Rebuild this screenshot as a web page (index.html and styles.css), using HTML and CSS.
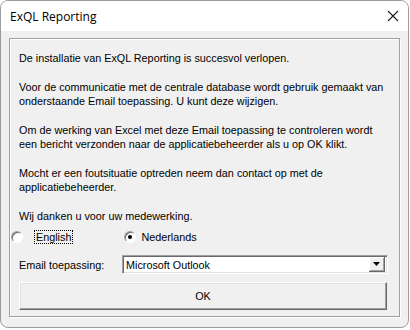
FILE: index.html
```html
<!DOCTYPE html>
<html lang="nl">
<head>
    <meta charset="UTF-8">
    <title>ExQL Reporting</title>
    <link rel="stylesheet" href="styles.css">
</head>
<body>

<div class="window">
    <div class="titlebar">
        <span class="title">ExQL Reporting</span>
        <svg class="close" width="12" height="12" viewBox="0 0 12 12">
            <path d="M1 1 L11 11 M11 1 L1 11" stroke="#1a1a1a" stroke-width="1.1" fill="none"/>
        </svg>
    </div>

    <div class="client">
        <div class="frame">
            <p>De installatie van ExQL Reporting is succesvol verlopen.</p>
            <p>Voor de communicatie met de centrale database wordt gebruik gemaakt van<br>onderstaande Email toepassing. U kunt deze wijzigen.</p>
            <p>Om de werking van Excel met deze Email toepassing te controleren wordt<br>een bericht verzonden naar de applicatiebeheerder als u op OK klikt.</p>
            <p>Mocht er een foutsituatie optreden neem dan contact op met de<br>applicatiebeheerder.</p>
            <p class="last">Wij danken u voor uw medewerking.</p>

            <div class="languages">
                <label class="radio english">
                    <span class="dot"></span>
                    <span class="focus">English</span>
                </label>
                <label class="radio checked">
                    <span class="dot"></span>
                    <span>Nederlands</span>
                </label>
            </div>

            <div class="mailrow">
                <span class="mailLabel">Email toepassing:</span>
                <div class="combo">
                    <span class="comboText">Microsoft Outlook</span>
                    <span class="comboButton">
                        <svg width="7" height="4" viewBox="0 0 7 4"><path d="M0 0 H7 L3.5 4 Z" fill="#000"/></svg>
                    </span>
                </div>
            </div>

            <button type="button" class="okButton">OK</button>
        </div>
    </div>
</div>

</body>
</html>
```

FILE: styles.css
```css
body {
    margin: 0;
    background-color: #ffffff;
    font-family: "Liberation Sans", Arial, sans-serif;
}

.window {
    width: 407px;
    height: 326px;
    border: 1px solid #9c9c9c;
    border-radius: 8px;
    background-color: #f0f0f0;
    overflow: hidden;
}

.titlebar {
    height: 30px;
    background-color: #fff;
    display: flex;
    align-items: center;
    justify-content: space-between;
    padding: 0 9px 0 9px;
}

.title {
    font-family: "Open Sans", "Noto Sans", sans-serif;
    font-size: 12px;
    color: #000;
    margin-top: 1px;
}

.client {
    padding: 7px 8px 0 8px;
}

.frame {
    border: 1px solid #a0a0a0;
    box-shadow: inset 1px 1px 0 #fff, 1px 1px 0 #fff;
    padding: 12px 9px 0 9px;
    font-size: 10.8px;
    color: #000;
    box-sizing: border-box;
    height: 279px;
}

.frame p {
    margin: 0 0 14px 0;
    line-height: 14.5px;
    white-space: nowrap;
}

.frame p.last {
    margin-bottom: 6px;
}

.languages {
    display: flex;
    align-items: center;
    height: 16px;
}

.radio {
    display: flex;
    align-items: center;
}

.radio.english {
    margin-left: -8px;
    gap: 12px;
}

.radio.checked {
    margin-left: 52px;
    gap: 5px;
}

.dot {
    width: 10px;
    height: 10px;
    border-radius: 50%;
    border: 1px solid;
    border-color: #a0a0a0 #fff #fff #a0a0a0;
    background-color: #fff;
    box-shadow: inset 1px 1px 0 #696969;
    position: relative;
}

.checked .dot::after {
    content: "";
    position: absolute;
    left: 3px;
    top: 3px;
    width: 4px;
    height: 4px;
    border-radius: 50%;
    background-color: #000;
}

.focus {
    outline: 1px dotted #000;
    outline-offset: 0;
    padding: 0 1px;
}

.mailrow {
    display: flex;
    align-items: center;
    margin-top: 10px;
}

.mailLabel {
    width: 103px;
}

.combo {
    flex: 1;
    height: 15px;
    display: flex;
    align-items: center;
    background-color: #fff;
    border: 1px solid;
    border-color: #a0a0a0 #fff #fff #a0a0a0;
    box-shadow: inset 1px 1px 0 #696969, inset -1px -1px 0 #e3e3e3;
    padding: 1px 2px 1px 2px;
    margin-right: 2px;
}

.comboText {
    flex: 1;
    padding-left: 1px;
}

.comboButton {
    width: 16px;
    height: 15px;
    display: flex;
    align-items: center;
    justify-content: center;
    background-color: #f0f0f0;
    border-right: 1px solid #696969;
    border-bottom: 1px solid #696969;
    box-shadow: inset 1px 1px 0 #fff, inset -1px -1px 0 #a0a0a0;
    box-sizing: border-box;
}

.okButton {
    display: block;
    width: 368px;
    height: 28px;
    margin-top: 8px;
    background-color: #f0f0f0;
    border: 1px solid;
    border-color: #fff #696969 #696969 #fff;
    box-shadow: inset -1px -1px 0 #a0a0a0, inset 1px 1px 0 #e3e3e3;
    font-family: "Liberation Sans", Arial, sans-serif;
    font-size: 10.8px;
    color: #000;
}
```
